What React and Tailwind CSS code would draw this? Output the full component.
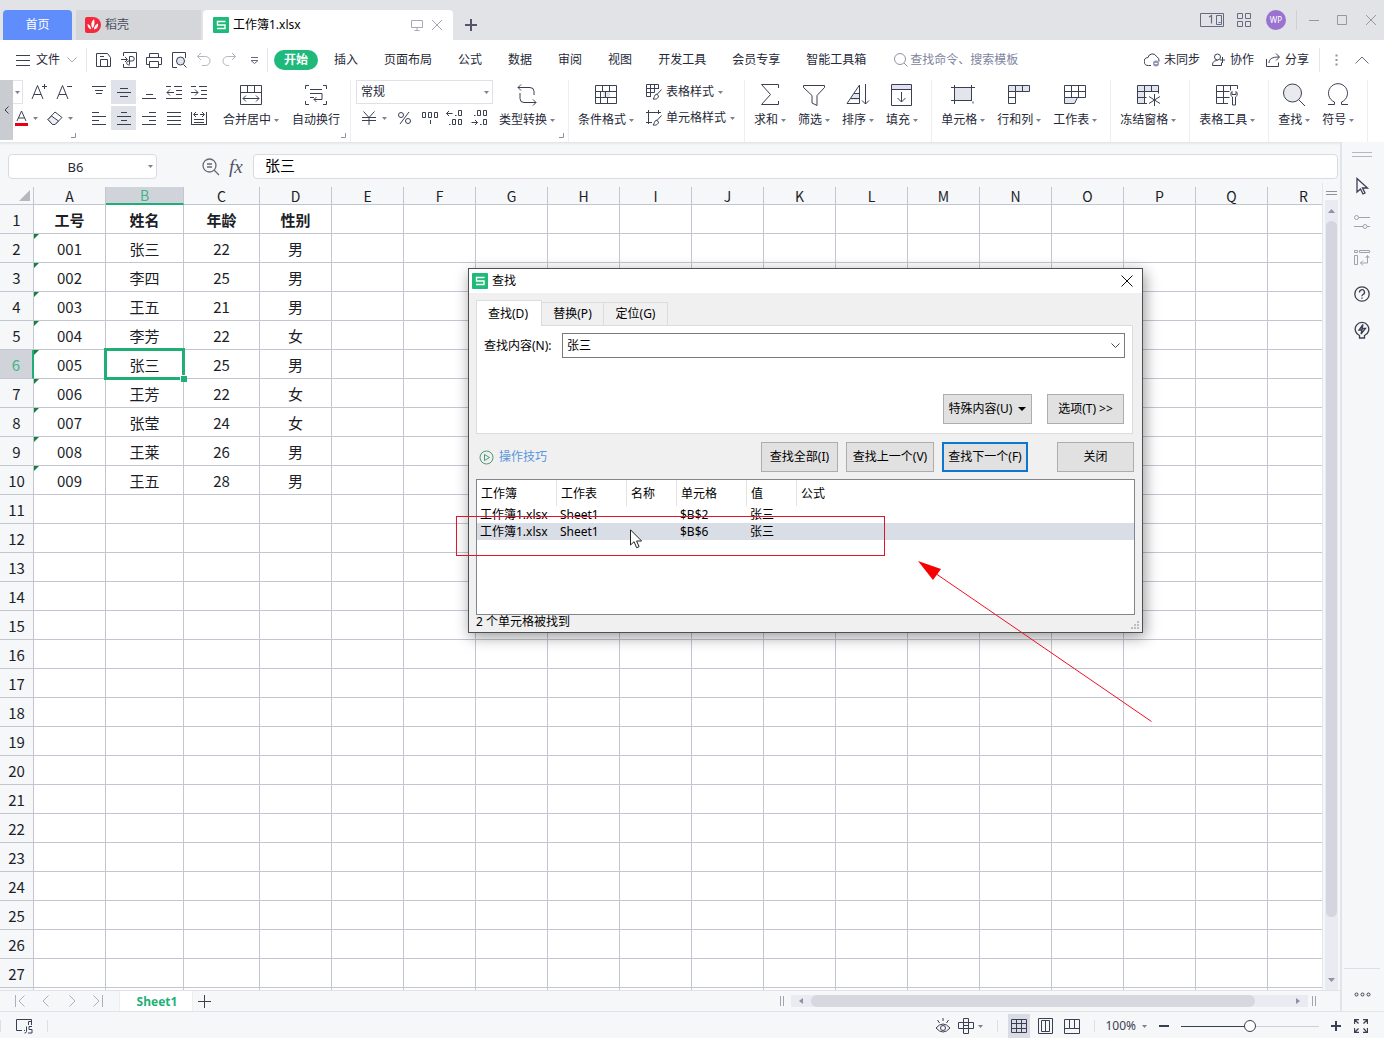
import React from "react";

const INK = "#3b3f52";

function Svg({ w = 24, h = 24, d, color = INK, sw = 1, children, className = "" }) {
  return (
    <svg
      width={w}
      height={h}
      viewBox={`0 0 ${w} ${h}`}
      fill="none"
      stroke={color}
      strokeWidth={sw}
      className={`shrink-0 ${className}`}
      aria-hidden="true"
    >
      {d && <path d={d} />}
      {children}
    </svg>
  );
}

function Caret({ color = "#7d8191" }) {
  return (
    <svg width="5" height="3" viewBox="0 0 5 3" className="shrink-0" aria-hidden="true">
      <path d="M0 0h5L2.5 3z" fill={color} />
    </svg>
  );
}

function Logo() {
  return (
    <svg width="16" height="16" viewBox="0 0 16 16" className="shrink-0" aria-hidden="true">
      <rect width="16" height="16" rx="1" fill="#1dba79" />
      <path d="M12.5 4.5h-8v3.5h7.5v3.5h-8" fill="none" stroke="#fff" strokeWidth="1.4" />
    </svg>
  );
}

function Corner() {
  return (
    <svg width="5" height="5" viewBox="0 0 5 5" className="absolute right-1 bottom-1" aria-hidden="true">
      <path d="M4.500 0v4.500H0" fill="none" stroke="#8d91a0" />
    </svg>
  );
}

/* ---------- title bar ---------- */
function TitleBar() {
  return (
    <header className="flex h-10 shrink-0 items-end bg-[#e1e3e6]">
      <button className="ml-[3px] h-[30px] w-[69px] rounded-t-sm bg-[#5f8dfb] text-white">首页</button>
      <button className="ml-1 flex h-[30px] w-[125px] items-center gap-1 bg-[#d5d6da] pl-[9px] text-[#4a4d5c]">
        <svg width="16" height="16" viewBox="0 0 16 16" aria-hidden="true">
          <path d="M0 2a2 2 0 0 1 2-2h6a8 8 0 0 1 0 16H2a2 2 0 0 1-2-2z" fill="#f5283c" />
          <path d="M7.500 11.500C5.500 8 6 5 9 2c1 4 .5 7-1.500 9.500zM6 12.500C3.500 11.500 2.500 9.500 2.500 7 5 8 6 9.500 6 12.500zM9 12.500c0-3 1.500-5 4-6 .5 3-1 5.500-4 6z" fill="#fff" />
        </svg>
        <span>稻壳</span>
      </button>
      <div className="ml-[2px] flex h-[30px] w-[250px] items-center rounded-t-sm bg-white pl-[10px] text-black">
        <Logo />
        <span className="ml-1 flex-1">工作簿1.xlsx</span>
        <button aria-label="窗口" className="mr-2">
          <Svg w={12} h={12} color="#a6a9b5" d="M.5 1.500h11v7H.5zM6 8.500v3M3.500 11.500h5" />
        </button>
        <button aria-label="关闭标签" className="mr-2.5">
          <Svg w={12} h={12} color="#a6a9b5" d="M1 1l10 10M11 1L1 11" />
        </button>
      </div>
      <button aria-label="新建" className="mb-[9px] ml-3">
        <Svg w={12} h={12} sw={2} color="#52566b" d="M6 0v12M0 6h12" />
      </button>
      <div className="ml-auto flex h-10 items-center">
        <button aria-label="排列窗口">
          <Svg w={24} h={14} color="#666a80" d="M.5.500h23v13H.5zM16.500 2.500h5v9h-5zM18.500 9.500h2">
            <path d="M9 4l2.500-1.500v8" strokeWidth="1.200" />
          </Svg>
        </button>
        <button aria-label="应用" className="ml-[13px]">
          <Svg w={14} h={14} color="#666a80" d="M.5.500h5v5h-5zM8.500.500h5v5h-5zM.5 8.500h5v5h-5zM8.500 8.500h5v5h-5z" />
        </button>
        <button className="ml-[15px] h-5 w-5 rounded-full bg-[#9a72d0] text-[8px] text-white">WP</button>
        <span className="mr-2.5 ml-2.5 h-5 w-px bg-[#cfd1d6]" />
        <button aria-label="最小化" className="ml-[2px]">
          <Svg w={10} h={10} color="#9497a6" d="M0 5.500h10" />
        </button>
        <button aria-label="最大化" className="ml-[18px]">
          <Svg w={10} h={10} color="#9497a6" d="M.5.500h9v9h-9z" />
        </button>
        <button aria-label="关闭" className="mr-2 ml-[19px]">
          <Svg w={10} h={10} color="#9497a6" d="M0 0l10 10M10 0L0 10" />
        </button>
      </div>
    </header>
  );
}

/* ---------- menu bar ---------- */
const MENUS = ["插入", "页面布局", "公式", "数据", "审阅", "视图", "开发工具", "会员专享", "智能工具箱"];

function MenuBar() {
  return (
    <nav className="flex h-10 shrink-0 items-center bg-white pb-px text-[#262938]">
      <button className="ml-4 flex items-center">
        <Svg w={14} h={12} d="M0 1.500h14M0 6.500h14M0 11.500h14" />
        <span className="ml-1.5">文件</span>
        <Svg w={10} h={6} color="#a6a9b5" className="ml-[7px]" d="M.5.500l4.500 4.500L9.500.500" />
      </button>
      <span className="ml-[9px] h-6 w-px bg-[#e4e6ea]" />
      <div className="ml-[9px] flex items-center gap-[9px]">
        <button aria-label="保存"><Svg w={16} h={16} d="M.5 1.500h11l3 4v9h-14zM4.500 14.500v-7h7v7M4 4.500h4" /></button>
        <button aria-label="输出为PDF"><Svg w={16} h={16} d="M2.500 4V.500h13v15h-13V12M0 7.500h6M4 5l2.500 2.500L4 10M8.500 12V4.500h2.500a2 2 0 0 1 0 4.500H8a2 2 0 1 0 1 3.500" /></button>
        <button aria-label="打印"><Svg w={16} h={16} d="M3.500 5V1.500h9V5M3.500 12.500h-3v-7h15v7h-3M3.500 9.500h9v6h-9z" /></button>
        <button aria-label="打印预览">
          <Svg w={16} h={16} d="M6 15.500H1.500V.500h13V6M12.500 12.500l3 3"><circle cx="9.500" cy="9" r="4" fill="#e3e5ec" /></Svg>
        </button>
        <button aria-label="撤销"><Svg w={16} h={16} color="#b2b5c0" d="M5 1L1.500 4.500 5 8M1.500 4.500h8a4.500 4.500 0 0 1 0 9H6" /></button>
        <button aria-label="恢复"><Svg w={16} h={16} color="#b2b5c0" d="M11 1l3.500 3.500L11 8M14.500 4.500h-8a4.500 4.500 0 0 0 0 9H8" /></button>
        <button aria-label="更多命令"><Svg w={16} h={10} color="#666a80" d="M5 2.500h7M5 5.500h7L8.500 8.500z" /></button>
      </div>
      <span className="ml-[5px] h-6 w-px bg-[#e4e6ea]" />
      <button className="ml-[6px] h-5 shrink-0 rounded-full bg-[#1fb97c] px-2.5 font-bold text-white">开始</button>
      <div className="ml-4 flex shrink-0 gap-[26px]">
        {MENUS.map((m) => (
          <button key={m} className="whitespace-nowrap">{m}</button>
        ))}
      </div>
      <label className="ml-7 flex items-center gap-[2px]">
        <Svg w={14} h={14} color="#8e92a6" d="M10 10l3.500 3.500"><circle cx="6" cy="6" r="5.500" /></Svg>
        <input aria-label="查找命令、搜索模板" placeholder="查找命令、搜索模板" className="w-[112px] bg-transparent outline-none placeholder:text-[#8084a0]" />
      </label>
      <div className="ml-auto flex shrink-0 items-center">
        <button className="flex items-center gap-1">
          <Svg w={16} h={16} d="M7 13.500H4.500a4 4 0 0 1-.5-8 4.500 4.500 0 0 1 8.500-1 4.500 4.500 0 0 1 2.500 5">
            <circle cx="12" cy="11.500" r="3" fill="#9294b8" stroke="none" /><path d="M10.500 11.500h3" stroke="#fff" />
          </Svg>
          未同步
        </button>
        <button className="ml-3 flex items-center gap-1">
          <Svg w={14} h={14} d="M.5 12.500c0-4 2-5 5-5M.5 12.500h9v-3M10.500 4v6M8 7h5"><circle cx="5.500" cy="4" r="3" /></Svg>
          协作
        </button>
        <button className="ml-3 flex items-center gap-1">
          <Svg w={15} h={14} d="M.5 6v7.500h12v-4M3 10c0-4 3-6 10-6M10 .5L13.500 4 10 7.500" />
          分享
        </button>
        <span className="ml-2.5 h-6 w-px bg-[#e4e6ea]" />
        <button aria-label="更多" className="ml-[15px]">
          <Svg w={3} h={14}>
            <path d="M.5 1.500h2v2h-2zM.5 6h2v2h-2zM.5 10.500h2v2h-2z" fill="#8d91a0" stroke="none" />
          </Svg>
        </button>
        <button aria-label="折叠功能区" className="mr-[15px] ml-[17px]"><Svg w={14} h={8} color="#666a80" d="M.5 7.500L7 1l6.500 6.500" /></button>
      </div>
    </nav>
  );
}

/* ---------- ribbon ---------- */
function BigButton({ label, caret = true, children }) {
  return (
    <button className="flex shrink-0 flex-col items-center pt-[3px] pr-2 pl-1">
      {children}
      <span className="mt-1 flex h-[18px] items-center gap-[3px] whitespace-nowrap">
        {label}
        {caret && <Caret />}
      </span>
    </button>
  );
}

function Group({ children, corner }) {
  return (
    <div className="relative flex shrink-0 border-r border-[#eceef1] px-[5px]">
      {children}
      {corner && <Corner />}
    </div>
  );
}

function SmallButton({ label, active, children }) {
  return (
    <button aria-label={label} className={`flex h-6 w-[25px] items-center justify-center ${active ? "bg-[#dfe2e8]" : ""}`}>
      {children}
    </button>
  );
}

const ALIGN = [
  ["顶端对齐", "M1 2.500h14M4 6.500h8M5 9.500h6"],
  ["垂直居中", "M4 4.500h8M1 8.500h14M4 12.500h8", true],
  ["底端对齐", "M5 10.500h7M1 14.500h14"],
  ["减少缩进", "M8 2.500h8M10 6.500h6M10 10.500h6M0 14.500h16M0 2.500h5M1 8.500h7M4 5.500l-3 3 3 3"],
  ["增加缩进", "M8 2.500h8M10 6.500h6M10 10.500h6M0 14.500h16M0 2.500h5M0 8.500h7M4 5.500l3 3-3 3"],
  ["左对齐", "M1 2.500h7M1 6.500h14M1 10.500h7M1 14.500h14"],
  ["居中", "M5 2.500h6M1 6.500h14M5 10.500h6M1 14.500h14", true],
  ["右对齐", "M8 2.500h7M1 6.500h14M8 10.500h7M1 14.500h14"],
  ["两端对齐", "M1 2.500h14M1 6.500h14M1 10.500h14M1 14.500h14"],
  ["分散对齐", "M.5 2v13M15.500 2v13M3 4.500h4M9 4.500h4M5 2L2.500 4.500 5 7M11 2l2.500 2.500L11 7M3 9.500h10M1 14.500h14M3 12.500h10"],
];

function Ribbon() {
  return (
    <section className="flex h-[62px] shrink-0 overflow-hidden bg-white text-[#262938]">
      <button aria-label="向左滚动" className="flex h-[60px] w-[13px] shrink-0 items-center justify-center bg-[#c9ccd1]">
        <Svg w={5} h={8} d="M4.500.500L1 4l3.500 3.500" />
      </button>
      <div className="relative w-[73px] shrink-0">
        <div className="flex h-6 items-center">
          <button aria-label="字号" className="flex h-6 w-[10px] items-center justify-center border-y border-r border-[#e1e3e8]"><Caret /></button>
          <button aria-label="增大字号" className="ml-2"><Svg w={17} h={18} d="M1 16L6.500 2.500 12 16M3 11.500h7M11 3.500h5M13.500 1v5" /></button>
          <button aria-label="减小字号" className="ml-2"><Svg w={17} h={18} d="M1 16L6.500 2.500 12 16M3 11.500h7M11 3.500h5" /></button>
        </div>
        <div className="mt-[2px] flex h-6 items-center">
          <button aria-label="字体颜色" className="ml-[2px]">
            <Svg w={13} h={16} d="M2 11L6.500 1 11 11M3.500 8h6"><path d="M0 13h13v3H0z" fill="#e60012" stroke="none" /></Svg>
          </button>
          <span className="ml-[5px]"><Caret /></span>
          <button aria-label="清除" className="mr-1 ml-[9px]">
            <Svg w={17} h={14}><path d="M1 8.500l7-7.500 7 5.500-7 7H5.500z" fill="#fff" /><path d="M4.500 5l7 5L8 13.500H5.500L1 8.500z" fill="#eceef3" /></Svg>
          </button>
          <Caret />
        </div>
        <svg width="5" height="5" viewBox="0 0 5 5" className="absolute right-[10px] bottom-1" aria-hidden="true">
          <path d="M4.500 0v4.500H0" fill="none" stroke="#8d91a0" />
        </svg>
      </div>
      <div className="relative flex shrink-0 gap-px border-r border-[#eceef1] pr-[2px]">
        <div className="mr-[7px] grid grid-cols-5 content-start gap-y-[2px]">
          {ALIGN.map(([label, d, active]) => (
            <SmallButton key={label} label={label} active={active}><Svg w={16} h={17} d={d} /></SmallButton>
          ))}
        </div>
        <BigButton label="合并居中">
          <Svg d="M1.500 2.500h21v19h-21zM1.500 9.500h21M8.500 2.500v7M15.500 2.500v7M4 15.500h16M7 12.500l-3 3 3 3M17 12.500l3 3-3 3" />
        </BigButton>
        <BigButton label="自动换行" caret={false}>
          <Svg d="M5 2.500H1.500V6M19 2.500h3.500V6M5 21.500H1.500V18M19 21.500h3.500V18M6 6.500h12M6 10.500h12M6 14.500h4M18 10.500v6h-8M12.500 14L10 16.500l2.500 2.500" />
        </BigButton>
        <Corner />
      </div>
      <Group corner>
        <div className="mr-[2px] w-[137px]">
          <div className="relative flex h-6 items-center">
            <select aria-label="数字格式" className="h-6 w-full appearance-none border border-[#dfe1e6] bg-white pl-1 outline-none">
              <option>常规</option>
            </select>
            <span className="pointer-events-none absolute right-1"><Caret /></span>
          </div>
          <div className="mt-[2px] flex h-6 items-center">
            <button aria-label="货币" className="flex w-9 items-center gap-[6px] pl-[6px]">
              <Svg w={14} h={14} d="M1.500.500L7 6.500l5.500-6M0 6.500h14M0 9.500h14M7 6.500V14" /><Caret />
            </button>
            <SmallButton label="百分比">
              <Svg w={13} h={14} d="M11 1L2 13"><circle cx="3" cy="4" r="2.500" /><circle cx="10" cy="10" r="2.500" /></Svg>
            </SmallButton>
            <SmallButton label="千位分隔">
              <Svg w={18} h={16} d="M1.500 2.500h3v5h-3zM7.500 2.500h3v5h-3zM13.500 2.500h3v5h-3zM9.500 10v4" />
            </SmallButton>
            <SmallButton label="增加小数位">
              <Svg w={17} h={16} d="M.5 3.500h6M3 1L.5 3.500 3 6M12.500.500h3v5h-3zM6.500 9.500h3v5h-3zM12.500 9.500h3v5h-3zM9 5.500h1.500M3 14.500h1.500" />
            </SmallButton>
            <SmallButton label="减少小数位">
              <Svg w={17} h={16} d="M.5 12.500h6M4 10l2.500 2.500L4 15M12.500.500h3v5h-3zM6.500.500h3v5h-3zM12.500 9.500h3v5h-3zM9 14.500h1.500M3 5.500h1.500" />
            </SmallButton>
          </div>
        </div>
        <BigButton label="类型转换">
          <Svg d="M6 1.500L3 4.500l3 3M3 4.500h12a4 4 0 0 1 4 4V12M5 10v5.500a4 4 0 0 0 4 4h12M18 16.500l3 3-3 3" />
        </BigButton>
      </Group>
      <Group>
        <BigButton label="条件格式">
          <Svg>
            <path d="M9 8.500h7v6H9z" fill="#e3e5ec" stroke="none" />
            <path d="M1.500 2.500h21v18h-21zM1.500 8.500h21M1.500 14.500h21M8.500 2.500v6M11.500 8.500v6M6.500 8.500v12M15.500 2.500v6M13.500 14.500v6" />
          </Svg>
        </BigButton>
        <div className="flex w-[97px] flex-col gap-[2px] pl-1">
          <button className="flex h-6 items-center gap-1 whitespace-nowrap">
            <Svg w={16} h={16} d="M5 12.500H.5v-12h12V5M.5 4.500h12M.5 8.500h8M4.500.500v12M8.500.500v8M15.500 5.500l-5 5.500M10.500 10l2 2c-.5 3-3 3.500-5.500 3 1.500-1 1-4 3.500-5z" />
            表格样式<Caret />
          </button>
          <button className="flex h-6 items-center gap-1 whitespace-nowrap">
            <Svg w={16} h={16} d="M0 2.500h15M2.500 0v14M12.500 0v4M0 12.500h6M15.500 5.500l-5 5.500M10.500 10l2 2c-.5 3-3 3.500-5.500 3 1.500-1 1-4 3.500-5z" />
            单元格样式<Caret />
          </button>
        </div>
      </Group>
      <Group>
        <BigButton label="求和"><Svg d="M20.500 5V1.500H3.500l9 10-9 10h17V18" /></BigButton>
        <BigButton label="筛选"><Svg d="M1.500 2.500h21v2l-7.500 8v10l-5-2.500v-7.500l-8.500-8z" /></BigButton>
        <BigButton label="排序">
          <Svg><path d="M8 11h5v6H4z" fill="#e3e5ec" stroke="none" /><path d="M1 20.500L13.500 2v18.500zM8 10.500h5M5 15.500h8.500M19.500 1v20M16 17.500l3.500 3.500 3.500-3.500" /></Svg>
        </BigButton>
        <BigButton label="填充">
          <Svg><path d="M2 2h20v5H2z" fill="#e3e1f0" stroke="none" /><path d="M1.500 1.500h20v21h-20zM1.500 6.500h20M11.500 9v10M7.500 15l4 4 4-4" /></Svg>
        </BigButton>
      </Group>
      <Group>
        <BigButton label="单元格">
          <Svg><path d="M4 5h17v12H4z" fill="#e3e5ec" stroke="none" /><path d="M0 4.500h24M0 17.500h21M3.500 2v19M20.500 2v16M22 18.500v2" /></Svg>
        </BigButton>
        <BigButton label="行和列">
          <Svg><path d="M2 3h20v5H2z" fill="#e3e5ec" stroke="none" /><path d="M1.500 2.500h21v6h-14v12h-7zM8.500 2.500v6M15.500 2.500v6M1.500 8.500h7M1.500 14.500h7" /></Svg>
        </BigButton>
        <BigButton label="工作表">
          <Svg><path d="M2 15h12l-2 5H2z" fill="#e3e5ec" stroke="none" /><path d="M1.500 2.500h21v12h-21zM1.500 8.500h21M8.500 2.500v12M15.500 2.500v12M1.500 14.500v6h10l3-6" /></Svg>
        </BigButton>
      </Group>
      <Group>
        <BigButton label="冻结窗格">
          <Svg><path d="M2 3h20v5H8v12H2z" fill="#e3e5ec" stroke="none" /><path d="M11 20.500H1.500v-18h21v8M1.500 8.500h21M1.500 14.500h9M8.500 2.500v18M15.500 2.500v6M18.500 11v12M13 13.500l11 7M24 13.500l-11 7" /></Svg>
        </BigButton>
      </Group>
      <Group>
        <BigButton label="表格工具">
          <Svg><path d="M13 20.500H1.500v-18h21V6M1.500 8.500h13M1.500 14.500h13M8.500 2.500v18M15.500 2.500v5M17 8.500c-2 2-1 5 .5 5.500v8h3v-8c2-1 2.500-4 .5-5.500v3h-4z" /></Svg>
        </BigButton>
      </Group>
      <Group>
        <BigButton label="查找">
          <Svg d="M17 17l6 6"><circle cx="10.500" cy="10" r="9" fill="#e9eaee" /></Svg>
        </BigButton>
        <BigButton label="符号"><Svg d="M2 21.500h6.500V19A9.500 9.500 0 1 1 15.500 19v2.500H22" /></BigButton>
      </Group>
    </section>
  );
}

/* ---------- formula bar ---------- */
function FormulaBar() {
  return (
    <div className="flex h-[41px] shrink-0 items-center bg-[#f5f7f9] pt-2 pr-[2px] pl-2 shadow-[inset_0_3px_3px_-2px_#d9dbdf]">
      <div className="flex h-[25px] w-[149px] items-center rounded-sm border border-[#d9dbe0] bg-white pr-[3px]">
        <input aria-label="名称框" defaultValue="B6" className="w-full bg-transparent pr-1.5 text-center text-[13px] text-[#262938] outline-none" />
        <Caret />
      </div>
      <button aria-label="缩放" className="ml-[45px]">
        <Svg w={18} h={18} color="#666a78" sw={1.3} d="M12 12l5 5M5 6h5M5 9h5"><circle cx="7.500" cy="7.500" r="6.500" /></Svg>
      </button>
      <button aria-label="插入函数" className="ml-[9px] w-[17px] text-left font-['Liberation_Serif',serif] text-[19px] text-[#4f5364] italic">fx</button>
      <input aria-label="编辑栏" defaultValue="张三" className="ml-[7px] h-[25px] min-w-0 flex-1 rounded-sm border border-[#d9dbe0] bg-white px-[11px] pb-1 text-[15px] text-black outline-none" />
    </div>
  );
}

/* ---------- sheet ---------- */
const COLUMNS = "ABCDEFGHIJKLMNOPQR".split("");
const DATA = [
  ["工号", "姓名", "年龄", "性别"],
  ["001", "张三", "22", "男"],
  ["002", "李四", "25", "男"],
  ["003", "王五", "21", "男"],
  ["004", "李芳", "22", "女"],
  ["005", "张三", "25", "男"],
  ["006", "王芳", "22", "女"],
  ["007", "张莹", "24", "女"],
  ["008", "王莱", "26", "男"],
  ["009", "王五", "28", "男"],
];

function colClass(c) {
  if (c === "B") return "w-[78px]";
  if (c === "C") return "w-[76px]";
  return "w-[72px]";
}

function Sheet() {
  return (
    <div className="min-w-0 flex-1 overflow-hidden border-r border-[#e4e6ea] bg-[#f5f7f9] pt-1">
      <table className="w-full table-fixed border-separate border-spacing-0 bg-white text-center font-['Noto_Sans_CJK_SC',sans-serif] text-[15px] leading-5 text-[#1c1e28]">
        <colgroup>
          <col className="w-[34px]" />
          {COLUMNS.map((c) => <col key={c} className={colClass(c)} />)}
        </colgroup>
        <thead>
          <tr className="h-[18px] bg-[#f5f7f9]">
            <th className="h-[18px] border-r border-b border-[#c3c5d0] p-0">
              <svg width="11" height="11" viewBox="0 0 11 11" className="ml-auto mr-[3px]" aria-hidden="true"><path d="M11 0v11H0z" fill="#b5b8c1" /></svg>
            </th>
            {COLUMNS.map((c) => (
              <th
                key={c}
                className={
                  c === "B"
                    ? "h-[18px] border-r border-b-2 border-r-[#c3c5d0] border-b-[#21ad76] bg-[#d1d3da] p-0 pt-px text-[14px] leading-[15px] font-normal text-[#3fb588]"
                    : "h-[18px] border-r border-b border-[#c3c5d0] p-0 pt-px text-[14px] leading-4 font-normal"
                }
              >
                {c}
              </th>
            ))}
          </tr>
        </thead>
        <tbody>
          {Array.from({ length: 28 }, (_, r) => (
            <tr key={r} className="h-[29px]">
              <th
                className={
                  r === 5
                    ? "border-r-2 border-b border-r-[#21ad76] border-b-[#c3c5d0] bg-[#d1d3da] p-0 pt-[2px] font-normal text-[#3fb588]"
                    : "border-r border-b border-[#c3c5d0] bg-[#f5f7f9] p-0 pt-[2px] font-normal"
                }
              >
                {r < 27 ? r + 1 : ""}
              </th>
              {COLUMNS.map((c, i) => (
                <td key={c} className={`relative border-r border-b border-[#c3c5d0] p-0 pt-[2px] ${r === 0 ? "font-bold" : ""}`}>
                  {DATA[r]?.[i]}
                  {i === 0 && r > 0 && r < DATA.length && (
                    <svg width="5" height="5" viewBox="0 0 5 5" className="absolute top-0 left-0" aria-hidden="true"><path d="M0 0h5L0 5z" fill="#16803c" /></svg>
                  )}
                  {r === 5 && i === 1 && (
                    <span className="absolute -inset-[2px] z-10 border-[3px] border-[#21ad76]">
                      <span className="absolute -right-[5px] -bottom-[5px] h-[7px] w-[7px] border-t border-l border-white bg-[#21ad76]" />
                    </span>
                  )}
                </td>
              ))}
            </tr>
          ))}
        </tbody>
      </table>
    </div>
  );
}

function VerticalScroll() {
  return (
    <div className="flex w-[17px] shrink-0 flex-col items-center bg-[#f5f7f9] pt-1">
      <Svg w={11} h={13} color="#8d91a0" d="M0 4.500h11M0 7.500h11" />
      <div className="flex w-[13px] flex-1 flex-col items-center bg-[#e9ebf3]">
        <button aria-label="向上滚动" className="flex h-[21px] items-center"><svg width="7" height="4" viewBox="0 0 7 4" aria-hidden="true"><path d="M0 4h7L3.500 0z" fill="#8d91a0" /></svg></button>
        <div className="w-[11px] flex-[93] rounded-full bg-[#d3d5df]" />
        <div className="flex-[7]" />
        <button aria-label="向下滚动" className="flex h-[21px] items-center"><svg width="7" height="4" viewBox="0 0 7 4" aria-hidden="true"><path d="M0 0h7L3.500 4z" fill="#8d91a0" /></svg></button>
      </div>
    </div>
  );
}

function SheetTabs() {
  return (
    <div className="flex h-[22px] shrink-0 items-center border-t border-b border-[#dfe2e6] bg-[#f5f7f9]">
      <div className="ml-[14px] flex w-[105px] shrink-0 gap-[14px]">
        <button aria-label="第一张"><Svg w={12} h={12} color="#adb0bb" d="M1.500 0v12M10.500.500L5 6l5.500 5.500" /></button>
        <button aria-label="上一张"><Svg w={12} h={12} color="#adb0bb" d="M8.500.500L3 6l5.500 5.500" /></button>
        <button aria-label="下一张"><Svg w={12} h={12} color="#adb0bb" d="M3.500.500L9 6l-5.500 5.500" /></button>
        <button aria-label="最后一张"><Svg w={12} h={12} color="#adb0bb" d="M10.500 0v12M1.500.500L7 6l-5.500 5.500" /></button>
      </div>
      <button className="h-full w-[74px] shrink-0 border-r border-l border-[#eceef1] bg-white pt-px pl-[2px] font-bold text-[#1fb07a]">Sheet1</button>
      <button aria-label="新建工作表" className="ml-[5px]"><Svg w={13} h={13} d="M6.500 0v13M0 6.500h13" /></button>
      <div className="ml-auto flex shrink-0 items-center">
        <Svg w={4} h={10} color="#a0a3b0" d="M.5 0v10M3.500 0v10" />
        <div className="ml-[7px] flex h-3 w-[517px] items-center bg-[#e9ebf3]">
          <button aria-label="向左滚动" className="flex w-5 justify-center"><svg width="4" height="6" viewBox="0 0 4 6" aria-hidden="true"><path d="M4 0v6L0 3z" fill="#8d91a0" /></svg></button>
          <div className="h-3 flex-1 rounded-full bg-[#d5d8df]" />
          <span className="w-[33px]" />
          <button aria-label="向右滚动" className="flex w-5 justify-center"><svg width="4" height="6" viewBox="0 0 4 6" aria-hidden="true"><path d="M0 0v6l4-3z" fill="#8d91a0" /></svg></button>
        </div>
        <Svg w={4} h={10} color="#a0a3b0" className="mr-6 ml-1" d="M.5 0v10M3.500 0v10" />
      </div>
    </div>
  );
}

function SideBar() {
  return (
    <aside className="flex w-11 shrink-0 flex-col items-center border-b border-l-2 border-[#e1e4e8] bg-[#f5f7f9] pt-[10px] pr-[2px]">
      <Svg w={20} h={5} color="#b5b8c1" d="M0 .5h20M0 4.500h20" />
      <button aria-label="选择" className="mt-5"><Svg w={16} h={18} sw={1.3} d="M3 1.500v13.500l3.500-3 2.500 5 2-1-2.500-5h5z" /></button>
      <button aria-label="属性" className="mt-[19px]">
        <Svg w={16} h={16} color="#a0a3ae" d="M4.500 3.500H16M0 12.500h9M13 12.500h3"><circle cx="2.500" cy="3.500" r="2" /><circle cx="11" cy="12.500" r="2" /></Svg>
      </button>
      <button aria-label="分析" className="mt-5">
        <Svg w={16} h={16} color="#a0a3ae" d="M.5.500h3v2h-3zM5.500.500h10v2h-10zM.5 5.500h3v9h-3zM13.500 5.500v7.500h-7M11.500 8l2-2.500 2 2.500M9 10.500L6.500 13 9 15.500" />
      </button>
      <button aria-label="帮助" className="mt-5">
        <Svg w={16} h={16} sw={1.3} d="M5.500 6.500a2.500 2.500 0 1 1 3.500 2c-.8.500-1 .8-1 1.700M8 11.500v1.300"><circle cx="8" cy="8" r="7.200" /></Svg>
      </button>
      <button aria-label="技巧" className="mt-[19px]">
        <Svg w={16} h={18} sw={1.3} d="M5.500 14.500a6.800 6.800 0 1 1 5 0v2.500h-5zM9 3.500L5 9h3l-1 4 4.500-5.500H8z" />
      </button>
      <span className="mt-auto h-px w-9 bg-[#dcdfe3]" />
      <button aria-label="更多" className="mt-[23px] mb-[14px]">
        <Svg w={17} h={5}><circle cx="2.500" cy="2.500" r="1.500" /><circle cx="8.500" cy="2.500" r="1.500" /><circle cx="14.500" cy="2.500" r="1.500" /></Svg>
      </button>
    </aside>
  );
}

/* ---------- status bar ---------- */
function StatusBar() {
  return (
    <footer className="flex h-[26px] shrink-0 items-center bg-[#f5f7f9] pt-[2px] text-[#3b3f52]">
      <span className="h-3 w-px bg-[#dcdfe3]" />
      <button aria-label="宏" className="ml-[15px]">
        <Svg w={18} h={16} d="M6 12.500H.5v-11h15V4M12.500 7V3.500h3V7M8 12.500h1M10.500 8.500v5q0 1.500-2 1.500M16 8.500h-3v3h3v3.500h-4" />
      </button>
      <span className="ml-[13px] h-3 w-px bg-[#dcdfe3]" />
      <div className="ml-auto flex items-center">
        <button aria-label="护眼模式">
          <Svg w={16} h={18} d="M1 11q7-8 14 0-7 8-14 0M8 1v3M2.500 3l2 3M13.500 3l-2 3"><circle cx="8" cy="11" r="2.500" /></Svg>
        </button>
        <button aria-label="阅读模式" className="mr-1 ml-[7px]"><Svg w={16} h={16} d="M5.500.500h5v15h-5zM.5 4.500h15v6H.5zM5.500 7.500h5" /></button>
        <Caret />
        <span className="mr-2.5 ml-[14px] h-3 w-px bg-[#dcdfe3]" />
        <button aria-label="普通视图" className="flex h-6 w-[22px] items-center justify-center bg-[#d9dce5]"><Svg w={16} h={14} d="M.5.500h15v13H.5zM.5 4.500h15M.5 9.500h15M5.500.500v13M10.500.500v13" /></button>
        <button aria-label="页面布局" className="ml-2"><Svg w={15} h={16} d="M.5.500h14v15H.5zM3.500 2.500h8v11h-8zM7.500 2.500v11" /></button>
        <button aria-label="分页预览" className="ml-[11px]"><Svg w={16} h={15} d="M.5.500h15v14H.5zM5.500.500v9M10.500.500v9M5.500 9.500h10M.5 9.500h5" /></button>
        <span className="mr-[10px] ml-[14px] h-3 w-px bg-[#dcdfe3]" />
        <button className="mr-[11px] flex items-center gap-1.5">100%<Caret /></button>
        <button aria-label="缩小"><Svg w={12} h={12} sw={2} d="M1 6h10" /></button>
        <input
          type="range"
          aria-label="显示比例"
          defaultValue="50"
          className="mx-[11px] h-3 w-[138px] appearance-none bg-[linear-gradient(90deg,#3b3f52_50%,#cfd1d9_50%)] bg-[length:100%_1px] bg-center bg-no-repeat [&::-webkit-slider-thumb]:h-3 [&::-webkit-slider-thumb]:w-3 [&::-webkit-slider-thumb]:appearance-none [&::-webkit-slider-thumb]:rounded-full [&::-webkit-slider-thumb]:border [&::-webkit-slider-thumb]:border-[#3b3f52] [&::-webkit-slider-thumb]:bg-white"
        />
        <button aria-label="放大"><Svg w={12} h={12} sw={2} d="M1 6h10M6 1v10" /></button>
        <button aria-label="全屏" className="mr-4 ml-3">
          <Svg w={14} h={14} sw={1.3} d="M5 .5H.5V5M.5.500l4 4M9 .5h4.500V5M13.500.500l-4 4M5 13.500H.5V9M.5 13.500l4-4M9 13.500h4.500V9M13.500 13.500l-4-4" />
        </button>
      </div>
    </footer>
  );
}

/* ---------- find dialog ---------- */
const DBTN = "h-[30px] shrink-0 border border-[#adadad] bg-[#e1e1e1] whitespace-nowrap text-center";
const FOUND = [
  ["工作簿1.xlsx", "Sheet1", "", "$B$2", "张三", ""],
  ["工作簿1.xlsx", "Sheet1", "", "$B$6", "张三", ""],
];

function FindDialog() {
  return (
    <div role="dialog" aria-label="查找" className="absolute top-[268px] left-[468px] z-20 w-[675px] border border-[#4d4f55] bg-[#f0f0f0] text-black shadow-[2px_4px_14px_rgba(0,0,0,0.4)]">
      <div className="flex h-6 items-center bg-white pl-[3px]">
        <Logo />
        <span className="ml-1 flex-1">查找</span>
        <button aria-label="关闭" className="mr-[9px]"><Svg w={12} h={12} color="#111" d="M.5.500l11 11M11.500.500l-11 11" /></button>
      </div>
      <div className="px-[7px] pt-[7px]">
        <div role="tablist" className="relative z-10 -mb-px flex items-end">
          <button role="tab" aria-selected="true" className="h-[26px] w-[66px] border border-b-0 border-[#dcdcdc] bg-white pr-[2px]">查找(D)</button>
          <button role="tab" className="h-6 w-[62px] border-t border-r border-b border-[#dcdcdc]">替换(P)</button>
          <button role="tab" className="h-6 w-[64px] border-t border-r border-b border-[#dcdcdc]">定位(G)</button>
        </div>
        <div className="mr-[2px] h-[109px] border border-[#dcdcdc] bg-white pt-[7px] pr-[7px] pl-[7px]">
          <div className="flex items-center">
            <label htmlFor="find" className="w-[78px]">查找内容(N):</label>
            <div className="flex h-[25px] flex-1 items-center border border-[#7a7a7a] pr-1">
              <input id="find" defaultValue="张三" className="min-w-0 flex-1 px-1 outline-none" />
              <button aria-label="历史记录"><Svg w={9} h={6} color="#444" d="M.5.500l4 4 4-4" /></button>
            </div>
          </div>
          <div className="mt-9 flex justify-end gap-[15px] pr-px">
            <button className={`${DBTN} flex w-[89px] items-center justify-center gap-1.5`}>
              特殊内容(U)
              <svg width="8" height="4" viewBox="0 0 8 4" aria-hidden="true"><path d="M0 0h8L4 4z" /></svg>
            </button>
            <button className={`${DBTN} w-[77px]`}>选项(T) &gt;&gt;</button>
          </div>
        </div>
        <div className="mt-2 flex items-center pr-px">
          <a href="#tips" className="flex flex-1 items-center gap-[5px] pl-[3px] text-[#5b95dd]">
            <Svg w={15} h={15} color="#4a9a78" d="M5.500 4.500l5 3-5 3z"><circle cx="7.500" cy="7.500" r="6.500" /></Svg>
            操作技巧
          </a>
          <button className={`${DBTN} w-[77px]`}>查找全部(I)</button>
          <button className={`${DBTN} ml-2 w-[88px]`}>查找上一个(V)</button>
          <button className="ml-2 h-[30px] w-[86px] shrink-0 border-2 border-[#0f76d0] bg-[#e1e1e1] whitespace-nowrap">查找下一个(F)</button>
          <button className={`${DBTN} ml-[29px] w-[77px]`}>关闭</button>
        </div>
        <div className="mt-[7px] h-[136px] border border-[#82858c] bg-white">
          <table className="w-full table-fixed border-separate border-spacing-0 text-left leading-[17px]">
            <colgroup>
              <col className="w-20" /><col className="w-[70px]" /><col className="w-[50px]" /><col className="w-[70px]" /><col className="w-[50px]" /><col />
            </colgroup>
            <thead>
              <tr className="h-[26px]">
                {["工作簿", "工作表", "名称", "单元格", "值"].map((h) => (
                  <th key={h} className="border-r border-[#e3e3e3] py-0 pr-0 pl-1 font-normal">{h}</th>
                ))}
                <th className="py-0 pr-0 pl-1 font-normal">公式</th>
              </tr>
            </thead>
            <tbody>
              {FOUND.map((row, r) => (
                <tr key={r} className={r === 1 ? "h-[17px] bg-[#d9dde5]" : "h-[17px]"}>
                  {row.map((v, i) => (
                    <td key={i} className="py-0 pr-0 pl-[3px] whitespace-nowrap">{v}</td>
                  ))}
                </tr>
              ))}
            </tbody>
          </table>
        </div>
      </div>
      <div className="flex h-[17px] items-center justify-between pr-[2px] pb-[3px] pl-[7px]">
        <span>2 个单元格被找到</span>
        <svg width="9" height="9" viewBox="0 0 9 9" className="mt-1.5" aria-hidden="true">
          <path d="M6 0h2v2H6zM3 3h2v2H3zM6 3h2v2H6zM0 6h2v2H0zM3 6h2v2H3zM6 6h2v2H6z" fill="#bdbdbd" />
        </svg>
      </div>
    </div>
  );
}

function Annotation() {
  return (
    <>
      <div className="pointer-events-none absolute top-[516px] left-[456px] z-30 h-10 w-[429px] border border-[#e0142a]" />
      <svg width="240" height="164" viewBox="0 0 240 164" className="pointer-events-none absolute top-[560px] left-[916px] z-30" aria-hidden="true">
        <path d="M16 11l219.500 150.500" stroke="#f01020" fill="none" />
        <path d="M2 1l23 8-8 11z" fill="#f80000" />
      </svg>
      <svg width="13" height="20" viewBox="0 0 13 20" className="pointer-events-none absolute top-[529px] left-[630px] z-30" aria-hidden="true">
        <path d="M.5.800v15.200l3.600-3.300 2.500 6 2.500-1-2.500-5.700h5z" fill="#fff" stroke="#222" />
      </svg>
    </>
  );
}

export default function App() {
  return (
    <div className="relative flex h-screen flex-col overflow-hidden bg-[#f5f7f9] font-['Noto_Sans','Noto_Sans_CJK_SC',sans-serif] text-[12px] leading-[18px]">
      <TitleBar />
      <MenuBar />
      <Ribbon />
      <main className="flex min-h-0 flex-1">
        <div className="flex min-w-0 flex-1 flex-col">
          <FormulaBar />
          <div className="flex min-h-0 flex-1">
            <Sheet />
            <VerticalScroll />
          </div>
          <SheetTabs />
        </div>
        <SideBar />
      </main>
      <StatusBar />
      <FindDialog />
      <Annotation />
    </div>
  );
}
